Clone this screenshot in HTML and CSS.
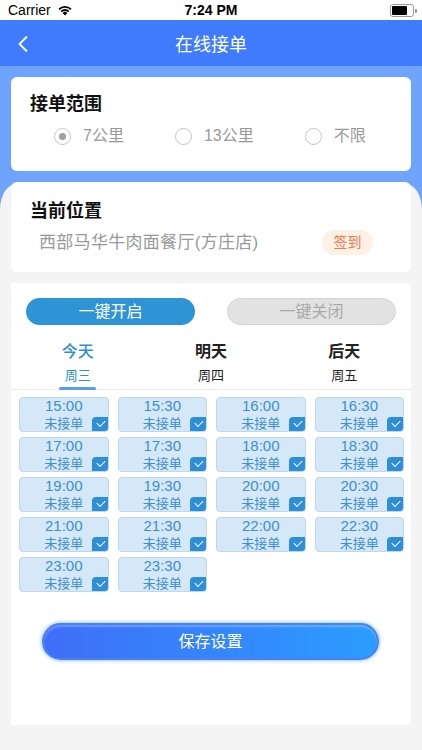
FILE: index.html
```html
<html>

<head>
    <meta charset="utf-8">
    <link rel="stylesheet" href="styles.css">
</head>

<body>
    <div class="status">
        <span class="carrier">Carrier</span>
        <svg class="wifi" width="16" height="12" viewBox="0 0 16 12">
            <path d="M8 11.5 L5.6 8.9 A3.4 3.4 0 0 1 10.4 8.9 Z" fill="#000"/>
            <path d="M3.6 6.9 A6.2 6.2 0 0 1 12.4 6.9 L11.1 8.2 A4.4 4.4 0 0 0 4.9 8.2 Z" fill="#000"/>
            <path d="M1.4 4.7 A9.3 9.3 0 0 1 14.6 4.7 L13.3 6 A7.4 7.4 0 0 0 2.7 6 Z" fill="#000"/>
        </svg>
        <span class="clock">7:24 PM</span>
        <span class="battery"><i></i></span>
    </div>

    <div class="nav">
        <svg class="back" width="12" height="18" viewBox="0 0 12 18">
            <path d="M10 1.5 L2.5 9 L10 16.5" fill="none" stroke="#fff" stroke-width="1.8"/>
        </svg>
        <span class="title">在线接单</span>
    </div>

    <div class="page">
        <div class="card range">
            <div class="card-title">接单范围</div>
            <div class="radios">
                <span class="radio on"><i></i>7公里</span>
                <span class="radio"><i></i>13公里</span>
                <span class="radio"><i></i>不限</span>
            </div>
        </div>

        <div class="card place">
            <div class="card-title">当前位置</div>
            <div class="place-row">
                <span class="addr">西部马华牛肉面餐厅(方庄店)</span>
                <span class="sign">签到</span>
            </div>
        </div>

        <div class="card slots">
            <div class="switches">
                <span class="btn open">一键开启</span>
                <span class="btn close">一键关闭</span>
            </div>

            <div class="tabs">
                <div class="tab active"><b>今天</b><small>周三</small></div>
                <div class="tab"><b>明天</b><small>周四</small></div>
                <div class="tab"><b>后天</b><small>周五</small></div>
            </div>

            <div class="grid">
                <div class="slot"><span class="time">15:00</span><span class="state">未接单</span><span class="check"></span></div>
                <div class="slot"><span class="time">15:30</span><span class="state">未接单</span><span class="check"></span></div>
                <div class="slot"><span class="time">16:00</span><span class="state">未接单</span><span class="check"></span></div>
                <div class="slot"><span class="time">16:30</span><span class="state">未接单</span><span class="check"></span></div>
                <div class="slot"><span class="time">17:00</span><span class="state">未接单</span><span class="check"></span></div>
                <div class="slot"><span class="time">17:30</span><span class="state">未接单</span><span class="check"></span></div>
                <div class="slot"><span class="time">18:00</span><span class="state">未接单</span><span class="check"></span></div>
                <div class="slot"><span class="time">18:30</span><span class="state">未接单</span><span class="check"></span></div>
                <div class="slot"><span class="time">19:00</span><span class="state">未接单</span><span class="check"></span></div>
                <div class="slot"><span class="time">19:30</span><span class="state">未接单</span><span class="check"></span></div>
                <div class="slot"><span class="time">20:00</span><span class="state">未接单</span><span class="check"></span></div>
                <div class="slot"><span class="time">20:30</span><span class="state">未接单</span><span class="check"></span></div>
                <div class="slot"><span class="time">21:00</span><span class="state">未接单</span><span class="check"></span></div>
                <div class="slot"><span class="time">21:30</span><span class="state">未接单</span><span class="check"></span></div>
                <div class="slot"><span class="time">22:00</span><span class="state">未接单</span><span class="check"></span></div>
                <div class="slot"><span class="time">22:30</span><span class="state">未接单</span><span class="check"></span></div>
                <div class="slot"><span class="time">23:00</span><span class="state">未接单</span><span class="check"></span></div>
                <div class="slot"><span class="time">23:30</span><span class="state">未接单</span><span class="check"></span></div>
            </div>

            <div class="save">保存设置</div>
        </div>
    </div>
</body>

</html>
```

FILE: styles.css
```css
body {
    margin: 0;
    width: 422px;
    height: 750px;
    background: #f4f4f4;
    font-family: "Liberation Sans", "Noto Sans CJK SC", sans-serif;
    overflow: hidden;
}

/* status bar */
.status {
    height: 20px;
    background: #fff;
    display: flex;
    align-items: center;
    position: relative;
    font-size: 14px;
    color: #000;
}
.carrier {
    margin-left: 8px;
}
.wifi {
    margin-left: 6px;
}
.clock {
    position: absolute;
    left: 0;
    right: 0;
    text-align: center;
    font-weight: 700;
}
.battery {
    margin-left: auto;
    margin-right: 8px;
    width: 20px;
    height: 9px;
    border: 1px solid #999;
    border-radius: 3px;
    padding: 1px;
    box-sizing: content-box;
    position: relative;
}
.battery i {
    display: block;
    width: 15px;
    height: 9px;
    background: #000;
    border-radius: 1px;
}
.battery:after {
    content: "";
    position: absolute;
    right: -4px;
    top: 4px;
    width: 2px;
    height: 4px;
    background: #999;
    border-radius: 0 1px 1px 0;
}

/* nav */
.nav {
    height: 46px;
    background: #3f7cfd;
    display: flex;
    align-items: center;
    justify-content: center;
    position: relative;
}
.back {
    position: absolute;
    left: 17px;
    top: 15px;
}
.title {
    color: #fff;
    font-size: 18px;
}

/* page */
.page {
    position: relative;
    padding: 11px 11px 26px;
    display: flex;
    flex-direction: column;
    gap: 11px;
}
.page:before {
    content: "";
    position: absolute;
    left: 0;
    right: 0;
    top: 0;
    height: 146px;
    background: #6ea4fb;
}
.page:after {
    content: "";
    position: absolute;
    left: 0;
    right: 0;
    top: 118px;
    height: 60px;
    background: #f4f4f4;
    border-radius: 16px 16px 0 0 / 26px 26px 0 0;
}
.card {
    position: relative;
    z-index: 1;
    background: #fff;
    border-radius: 6px;
}
.card-title {
    font-size: 18px;
    font-weight: 700;
    line-height: 22px;
    color: #111;
    padding-left: 19px;
}

.range {
    height: 94px;
    box-sizing: border-box;
    padding-top: 16px;
}
.radios {
    display: flex;
    gap: 51px;
    padding-left: 43px;
    margin-top: 10px;
    line-height: 22px;
    font-size: 16px;
    color: #999;
}
.radio {
    display: flex;
    align-items: center;
    gap: 12px;
}
.radio i {
    width: 15px;
    height: 15px;
    border: 1px solid #c4c4c4;
    border-radius: 50%;
    position: relative;
}
.radio.on i:after {
    content: "";
    position: absolute;
    left: 4px;
    top: 4px;
    width: 7px;
    height: 7px;
    border-radius: 50%;
    background: #a0a0a0;
}

.place {
    height: 90px;
    box-sizing: border-box;
    padding-top: 18px;
}
.place-row {
    display: flex;
    align-items: center;
    margin-top: 8px;
    padding-left: 28px;
}
.addr {
    font-size: 17px;
    color: #999;
    line-height: 24px;
    letter-spacing: 0.3px;
}
.sign {
    margin-left: auto;
    margin-right: 38px;
    width: 51px;
    height: 25px;
    line-height: 25px;
    text-align: center;
    border-radius: 13px;
    background: #fdf0e5;
    color: #ec7c50;
    font-size: 14px;
}

/* slots card */
.slots {
    height: 442px;
    border-radius: 3px;
    padding-top: 15px;
    box-sizing: border-box;
}
.switches {
    display: flex;
    justify-content: space-between;
    padding: 0 15px;
}
.btn {
    width: 169px;
    height: 27px;
    line-height: 27px;
    border-radius: 14px;
    text-align: center;
    font-size: 16px;
    box-sizing: border-box;
}
.btn.open {
    background: #2e94d6;
    color: #fff;
}
.btn.close {
    background: #e2e2e2;
    border: 1px solid #d4d4d4;
    line-height: 25px;
    color: #a9a9a9;
}

.tabs {
    display: flex;
    margin-top: 16px;
    border-bottom: 1px solid #ececec;
}
.tab {
    flex: 1;
    display: flex;
    flex-direction: column;
    align-items: center;
    color: #222;
    padding-bottom: 4px;
    position: relative;
}
.tab b {
    font-size: 16px;
    line-height: 22px;
}
.tab small {
    font-size: 13px;
    line-height: 18px;
    margin-top: 4px;
}
.tab.active {
    color: #2f8fd6;
}
.tab.active b {
    font-weight: 500;
}
.tab.active:after {
    content: "";
    position: absolute;
    bottom: -1px;
    width: 37px;
    height: 3px;
    border-radius: 2px;
    background: #5a9ee8;
}

.grid {
    display: grid;
    grid-template-columns: repeat(4, 1fr);
    column-gap: 9px;
    row-gap: 5px;
    padding: 7px 7px 0 8px;
}
.slot {
    height: 35px;
    box-sizing: border-box;
    background: #d5e8f7;
    border: 1px solid #bcd7ee;
    border-radius: 4px;
    position: relative;
    display: flex;
    flex-direction: column;
    align-items: center;
    color: #3b8fd2;
    overflow: hidden;
}
.time {
    font-size: 15px;
    line-height: 16px;
}
.state {
    font-size: 13px;
    line-height: 17px;
    margin-top: 1px;
}
.check {
    position: absolute;
    right: -1px;
    bottom: -1px;
    width: 17px;
    height: 15px;
    background: #2e8fd7;
    border-radius: 4px 0 4px 0;
}
.check:after {
    content: "";
    position: absolute;
    left: 5px;
    top: 3px;
    width: 7px;
    height: 4px;
    border-left: 1.6px solid #fff;
    border-bottom: 1.6px solid #fff;
    transform: rotate(-45deg);
}

.save {
    margin: 31px 32px 0 31px;
    height: 37px;
    line-height: 33px;
    box-sizing: border-box;
    border: 2px solid #4c7ef9;
    border-radius: 19px;
    background: linear-gradient(90deg, #3f6ef7, #2b9dff);
    box-shadow: 0 0 4px #64b4ff, inset 0 2px 2px rgba(255, 255, 255, 0.25);
    text-align: center;
    color: #fff;
    font-size: 16px;
}
```
